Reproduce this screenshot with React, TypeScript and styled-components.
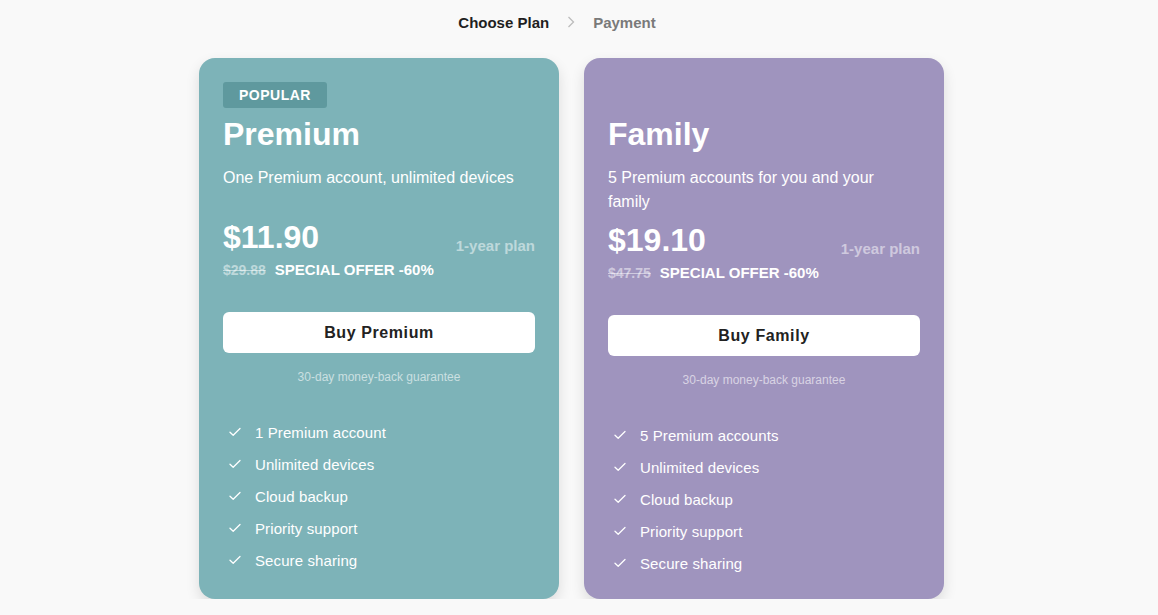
import React from 'react'
import styled, { createGlobalStyle } from 'styled-components'

const GlobalStyle = createGlobalStyle`
  html, body {
    margin: 0;
    padding: 0;
    background: #f9f9f9;
    font-family: "Liberation Sans", Arial, sans-serif;
  }
`

type Plan = {
  name: string
  badge?: string
  description: string
  price: string
  oldPrice: string
  offer: string
  cta: string
  color: string
  badgeColor: string
  features: string[]
}

const plans: Plan[] = [
  {
    name: 'Premium',
    badge: 'POPULAR',
    description: 'One Premium account, unlimited devices',
    price: '$11.90',
    oldPrice: '$29.88',
    offer: 'SPECIAL OFFER -60%',
    cta: 'Buy Premium',
    color: '#7db3b8',
    badgeColor: '#5f999e',
    features: ['1 Premium account', 'Unlimited devices', 'Cloud backup', 'Priority support', 'Secure sharing'],
  },
  {
    name: 'Family',
    description: '5 Premium accounts for you and your family',
    price: '$19.10',
    oldPrice: '$47.75',
    offer: 'SPECIAL OFFER -60%',
    cta: 'Buy Family',
    color: '#9f94be',
    badgeColor: 'transparent',
    features: ['5 Premium accounts', 'Unlimited devices', 'Cloud backup', 'Priority support', 'Secure sharing'],
  },
]

const Page = styled.div`
  width: 745px;
  margin-left: 199px;
  padding-top: 12px;
`

const Steps = styled.nav`
  display: flex;
  align-items: center;
  justify-content: center;
  gap: 18px;
  margin-left: -29px;
  height: 20px;
  font-size: 15px;
  font-weight: 700;
`

const Step = styled.span<{ $active?: boolean }>`
  color: ${p => (p.$active ? '#1f1f1f' : '#7a7a7a')};
`

const Cards = styled.div`
  display: flex;
  gap: 25px;
  margin-top: 26px;
`

const Card = styled.section<{ $bg: string }>`
  width: 360px;
  box-sizing: border-box;
  padding: 24px 24px 26px;
  background: ${p => p.$bg};
  border-radius: 16px;
  box-shadow: 0 6px 14px rgba(0, 0, 0, 0.12);
  color: #fff;
`

const Badge = styled.div<{ $bg: string }>`
  display: inline-block;
  height: 26px;
  line-height: 27px;
  padding: 0 16px;
  border-radius: 3px;
  background: ${p => p.$bg};
  font-size: 14px;
  font-weight: 700;
  letter-spacing: 0.5px;
  visibility: ${p => (p.$bg === 'transparent' ? 'hidden' : 'visible')};
`

const Title = styled.h2`
  margin: 6px 0 0;
  font-size: 32px;
  line-height: 40px;
  font-weight: 700;
`

const Description = styled.p`
  margin: 12px 0 0;
  min-height: 45px;
  font-size: 16px;
  line-height: 24px;
`

const PriceRow = styled.div`
  display: flex;
  align-items: flex-end;
  justify-content: space-between;
  margin-top: 8px;
`

const Price = styled.div`
  font-size: 32px;
  font-weight: 700;
  line-height: 36px;
`

const Term = styled.div`
  font-size: 15px;
  line-height: 18px;
  font-weight: 700;
  color: rgba(255, 255, 255, 0.5);
`

const OfferRow = styled.div`
  display: flex;
  align-items: baseline;
  gap: 9px;
  margin-top: 6px;
  font-size: 15px;
  font-weight: 700;
  line-height: 18px;
`

const OldPrice = styled.s`
  font-size: 14px;
  color: rgba(255, 255, 255, 0.5);
`

const BuyButton = styled.button`
  display: block;
  width: 100%;
  height: 41px;
  margin-top: 33px;
  border: none;
  border-radius: 6px;
  background: #fff;
  color: #222;
  font-family: inherit;
  font-size: 16px;
  font-weight: 700;
  letter-spacing: 0.6px;
  cursor: pointer;
`

const Guarantee = styled.div`
  margin-top: 17px;
  text-align: center;
  font-size: 12px;
  color: rgba(255, 255, 255, 0.6);
`

const Features = styled.ul`
  list-style: none;
  margin: 38px 0 0;
  padding: 0 0 0 6px;
  display: flex;
  flex-direction: column;
  gap: 12px;
`

const Feature = styled.li`
  display: flex;
  align-items: center;
  gap: 14px;
  height: 20px;
  font-size: 15px;
  letter-spacing: 0.1px;
`

const Check = () => (
  <svg width="12" height="10" viewBox="0 0 12 10" fill="none">
    <path d="M1 5.2 4.2 8.2 11 1.5" stroke="#fff" strokeWidth="1.3" strokeLinecap="round" strokeLinejoin="round" />
  </svg>
)

const Chevron = () => (
  <svg width="8" height="12" viewBox="0 0 8 12" fill="none">
    <path d="M1.5 1 6.5 6 1.5 11" stroke="#bdbdbd" strokeWidth="1.3" />
  </svg>
)

const PlanCard: React.FC<{ plan: Plan }> = ({ plan }) => (
  <Card $bg={plan.color}>
    <Badge $bg={plan.badgeColor}>{plan.badge ?? 'POPULAR'}</Badge>
    <Title>{plan.name}</Title>
    <Description>{plan.description}</Description>
    <PriceRow>
      <Price>{plan.price}</Price>
      <Term>1-year plan</Term>
    </PriceRow>
    <OfferRow>
      <OldPrice>{plan.oldPrice}</OldPrice>
      <span>{plan.offer}</span>
    </OfferRow>
    <BuyButton>{plan.cta}</BuyButton>
    <Guarantee>30-day money-back guarantee</Guarantee>
    <Features>
      {plan.features.map(f => (
        <Feature key={f}>
          <Check />
          {f}
        </Feature>
      ))}
    </Features>
  </Card>
)

const App: React.FC = () => (
  <>
    <GlobalStyle />
    <Page>
      <Steps>
        <Step $active>Choose Plan</Step>
        <Chevron />
        <Step>Payment</Step>
      </Steps>
      <Cards>
        {plans.map(p => (
          <PlanCard key={p.name} plan={p} />
        ))}
      </Cards>
    </Page>
  </>
)

export default App
